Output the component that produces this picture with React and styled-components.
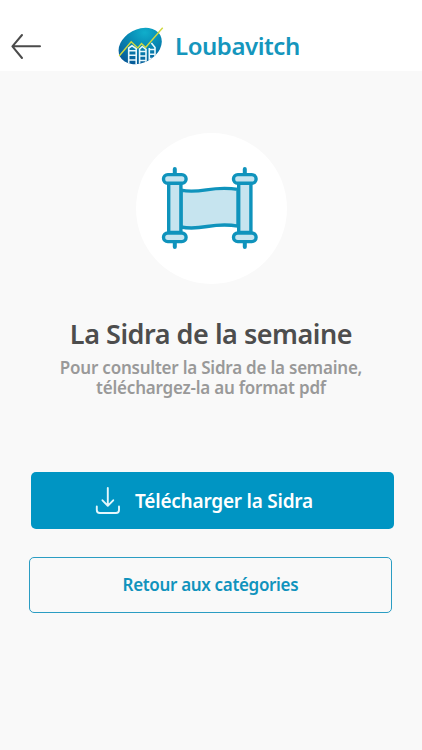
import React from "react";
import styled, { createGlobalStyle, css } from "styled-components";

const GlobalStyle = createGlobalStyle`
  *, *::before, *::after { box-sizing: border-box; }
  body {
    margin: 0;
    background: #f9f9f9;
    font-family: "Noto Sans", "Open Sans", sans-serif;
    font-weight: 600;
  }
`;

const Screen = styled.div`
  min-height: 750px;
  display: flex;
  flex-direction: column;
  overflow: hidden;
`;

const Header = styled.header`
  height: 71px;
  flex: none;
  display: grid;
  grid-template-columns: 114px 1fr;
  align-items: center;
  padding-top: 20px;
  background: #fff;
`;

const BackButton = styled.button`
  width: 52px;
  height: 51px;
  padding: 0 0 0 10px;
  border: 0;
  background: none;
  display: flex;
  align-items: center;
`;

const Brand = styled.div`
  display: flex;
  align-items: center;
  gap: 8px;
`;

const BrandName = styled.span`
  color: #1596bd;
  font-size: 24px;
  line-height: 32px;
  letter-spacing: -0.45px;
  white-space: nowrap;
`;

const Main = styled.main`
  flex: 1;
  display: flex;
  flex-direction: column;
  padding: 62px 29px 0;
`;

const Medallion = styled.div`
  width: 151px;
  height: 151px;
  margin-left: 107px;
  border-radius: 50%;
  background: #fff;
  svg { display: block; }
`;

const Title = styled.h1`
  margin: 32px 0 0;
  color: #4d4d4d;
  font-size: 27px;
  line-height: 36px;
  font-weight: 600;
  letter-spacing: -0.47px;
  text-align: center;
  white-space: nowrap;
`;

const Subtitle = styled.p`
  margin: 6px 0 0;
  color: #999;
  font-size: 17px;
  line-height: 20px;
  letter-spacing: -0.22px;
  text-align: center;
`;

const Actions = styled.div`
  display: flex;
  flex-direction: column;
  gap: 28px;
  margin-top: 74.4px;
`;

const Button = styled.button`
  width: 363px;
  height: 56.3px;
  padding: 0;
  border-radius: 5px;
  display: flex;
  align-items: center;
  justify-content: center;
  font: inherit;
  white-space: nowrap;
  ${(p) =>
    p.$primary
      ? css`
          margin-left: 1.5px;
          gap: 14px;
          padding-right: 16px;
          border: 0;
          background: #0095c3;
          color: #fff;
          font-size: 19px;
          letter-spacing: -0.22px;
        `
      : css`
          margin-left: 0.4px;
          padding: 0 1px 1px 0;
          border: 1.3px solid #2b9dc3;
          background: #f9f9f9;
          color: #1093bd;
          font-size: 17px;
          letter-spacing: -0.33px;
        `}
`;

const BackIcon = () => (
  <svg width="32" height="28" viewBox="10 32 32 28" fill="none" stroke="#4b4b4b" strokeWidth="2" strokeLinecap="round" strokeLinejoin="round">
    <path d="M40 46.3H12.6M22 35L12.4 46.3L22 58" />
  </svg>
);

const Logo = () => (
  <svg width="53" height="43" viewBox="114 24 53 43" fill="none">
    <defs>
      <radialGradient id="globe" cx="0.58" cy="0.2" r="0.75">
        <stop offset="0" stopColor="#10aecb" />
        <stop offset="0.45" stopColor="#0788b3" />
        <stop offset="1" stopColor="#075b99" />
      </radialGradient>
      <clipPath id="globeClip">
        <ellipse cx="140.2" cy="46" rx="22.8" ry="16.8" transform="rotate(-28 140.2 46)" />
      </clipPath>
    </defs>
    <g clipPath="url(#globeClip)">
      <rect x="114" y="24" width="53" height="43" fill="url(#globe)" />
      <g stroke="#e8f8fc" strokeWidth="1.6">
        <path d="M128.7 64V48L132 45.8L136.2 48.6V64M139.6 64V49L142.3 46.5L146 49.5V64M149.3 62V48M151.4 43L155 47.5V60" />
        <path d="M128.7 50.7H136.2M128.7 55.3H136.2M128.7 60H136.2M139.6 51.5H146M139.6 56H146M139.6 60.5H146M149.3 49.5H155M149.3 54.2H155M149.3 58.5H155" strokeWidth="1.4" />
      </g>
    </g>
    <path d="M119.2 56L131.2 41.8L137.8 48L141.5 43.6L145.6 47.4L162.7 27.8" stroke="#d0d83e" strokeWidth="1.4" />
  </svg>
);

const ScrollIcon = () => (
  <svg width="151" height="151" viewBox="136 133 151 151" fill="#c6e4ef" stroke="#0f93bc" strokeWidth="3.4" strokeLinecap="round" strokeLinejoin="round">
    <path d="M181 190.2C202 194.4 211 184.9 238 189.4V226.2C212 221.3 203 231.3 181 227Z" />
    {[174.8, 244.8].map((x) => (
      <g key={x}>
        <path d={`M${x} 169V174M${x} 242.5V247`} strokeWidth="4" />
        <rect x={x - 6.1} y="183" width="12.2" height="49.5" />
        <rect x={x - 11.3} y="174.6" width="22.6" height="8.6" rx="4.3" />
        <rect x={x - 11.3} y="233" width="22.6" height="8.6" rx="4.3" />
      </g>
    ))}
  </svg>
);

const DownloadIcon = () => (
  <svg width="26" height="30" viewBox="95 486 26 30" fill="none" stroke="#e3f7fc" strokeWidth="1.9" strokeLinecap="round" strokeLinejoin="round">
    <path d="M107.8 488V505.5M102.5 500.3L107.8 505.8L113.2 500.3M96.8 506.4V510Q96.8 513 99.8 513H116Q119 513 119 510V506.4" />
  </svg>
);

export default function App() {
  return (
    <>
      <GlobalStyle />
      <Screen>
        <Header>
          <BackButton aria-label="Retour"><BackIcon /></BackButton>
          <Brand>
            <Logo />
            <BrandName>Loubavitch</BrandName>
          </Brand>
        </Header>
        <Main>
          <Medallion><ScrollIcon /></Medallion>
          <Title>La Sidra de la semaine</Title>
          <Subtitle>
            Pour consulter la Sidra de la semaine,
            <br />
            téléchargez-la au format pdf
          </Subtitle>
          <Actions>
            <Button $primary><DownloadIcon />Télécharger la Sidra</Button>
            <Button>Retour aux catégories</Button>
          </Actions>
        </Main>
      </Screen>
    </>
  );
}
